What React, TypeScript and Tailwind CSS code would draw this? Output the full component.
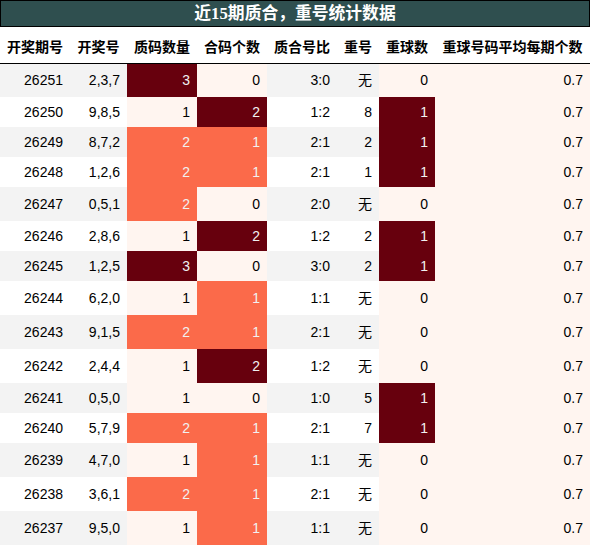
const rows: [string, string, number, number, string, string, number][] = [
  ["26251", "2,3,7", 3, 0, "3:0", "无", 0],
  ["26250", "9,8,5", 1, 2, "1:2", "8", 1],
  ["26249", "8,7,2", 2, 1, "2:1", "2", 1],
  ["26248", "1,2,6", 2, 1, "2:1", "1", 1],
  ["26247", "0,5,1", 2, 0, "2:0", "无", 0],
  ["26246", "2,8,6", 1, 2, "1:2", "2", 1],
  ["26245", "1,2,5", 3, 0, "3:0", "2", 1],
  ["26244", "6,2,0", 1, 1, "1:1", "无", 0],
  ["26243", "9,1,5", 2, 1, "2:1", "无", 0],
  ["26242", "2,4,4", 1, 2, "1:2", "无", 0],
  ["26241", "0,5,0", 1, 0, "1:0", "5", 1],
  ["26240", "5,7,9", 2, 1, "2:1", "7", 1],
  ["26239", "4,7,0", 1, 1, "1:1", "无", 0],
  ["26238", "3,6,1", 2, 1, "2:1", "无", 0],
  ["26237", "9,5,0", 1, 1, "1:1", "无", 0],
];

const headers = ["开奖期号", "开奖号", "质码数量", "合码个数", "质合号比", "重号", "重球数", "重球号码平均每期个数"];
const widths = ["w-[70px]", "w-[57px]", "w-[70px]", "w-[70px]", "w-[70px]", "w-[42px]", "w-[56px]", "w-[155px]"];

const LIGHT = "bg-[#fff5f0] text-black";
const MID = "bg-[#fb6a4a] text-[#f1f1f1]";
const DARK = "bg-[#67000d] text-[#f1f1f1]";

// low / mid / high shades per column, like a Reds gradient
function shade(v: number, min: number, max: number) {
  if (v === max) return DARK;
  if (v === min) return LIGHT;
  return MID;
}

export default function App() {
  return (
    <div
      className="w-[590px] bg-white text-[14px] text-black"
      style={{ fontFamily: '"Liberation Sans", "Noto Sans CJK SC", sans-serif' }}
    >
      <div
        className="h-[27px] border border-black bg-[#2f4f4f] flex items-center justify-center text-[16.8px] font-bold text-white"
        style={{ fontFamily: '"Liberation Serif", "Noto Sans CJK SC", serif' }}
      >
        近15期质合，重号统计数据
      </div>
      <table className="border-collapse table-fixed w-[590px]">
        <thead>
          <tr className="h-[36px] border-b border-black">
            {headers.map((h, i) => (
              <th
                key={h}
                className={`${widths[i]} p-0 pt-[3px] text-center font-bold whitespace-nowrap`}
                style={{ fontFamily: '"Noto Sans CJK SC", sans-serif' }}
              >
                {h}
              </th>
            ))}
          </tr>
        </thead>
        <tbody>
          {rows.map((r, i) => {
            const stripe = i % 2 === 0 ? "bg-[#f3f3f3]" : "bg-white";
            const tall = r[5] === "无";
            const cell = "p-0 pr-[7px] text-right align-middle";
            return (
              <tr key={r[0]} className={tall ? "h-[34px]" : "h-[30px]"}>
                <td className={`${cell} ${stripe}`}>{r[0]}</td>
                <td className={`${cell} ${stripe}`}>{r[1]}</td>
                <td className={`${cell} ${shade(r[2], 1, 3)}`}>{r[2]}</td>
                <td className={`${cell} ${shade(r[3], 0, 2)}`}>{r[3]}</td>
                <td className={`${cell} ${stripe}`}>{r[4]}</td>
                <td className={`${cell} ${stripe}`}>{r[5]}</td>
                <td className={`${cell} ${r[6] === 1 ? DARK : LIGHT}`}>{r[6]}</td>
                <td className={`${cell} ${LIGHT}`}>0.7</td>
              </tr>
            );
          })}
        </tbody>
      </table>
    </div>
  );
}
